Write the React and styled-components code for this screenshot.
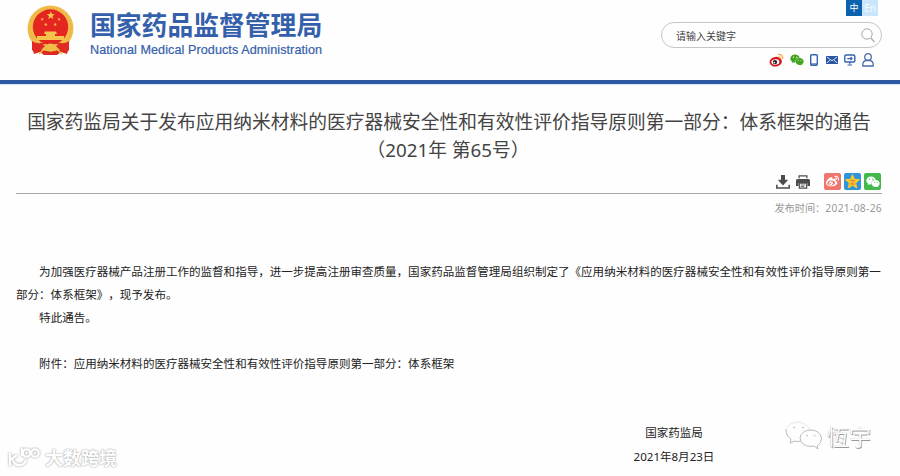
import React from 'react';
import styled, { createGlobalStyle } from 'styled-components';
import { FaWeixin, FaWeibo } from 'react-icons/fa';

const GlobalStyle = createGlobalStyle`
  * {
    box-sizing: border-box;
  }

  body {
    margin: 0;
    background: #fefefe;
    color: #333;
    font-family: 'Noto Sans', 'Noto Sans CJK SC', sans-serif;
    text-spacing-trim: space-all;
    overflow: hidden;
  }
`;

const Page = styled.div`
  position: relative;
  width: 900px;
  height: 476px;
`;

const Header = styled.header`
  display: flex;
  justify-content: space-between;
  height: 84px;
  padding-left: 27px;
  padding-right: 18px;
  border-bottom: 4px solid #3059a2;
  box-shadow: 0 1px 0 #cfe8f7;
`;

const Brand = styled.div`
  display: flex;
  padding-top: 4px;
`;

const BrandText = styled.div`
  display: flex;
  flex-direction: column;
  padding: 5px 0 0 16px;
  color: #3460ab;
`;

const BrandName = styled.div`
  font-size: 25.8px;
  font-weight: 700;
  line-height: 32px;
  white-space: nowrap;
`;

const BrandSub = styled.div`
  margin-top: 1px;
  font-family: 'Liberation Sans', sans-serif;
  font-size: 12.6px;
  line-height: 16px;
  letter-spacing: 0.08px;
  white-space: nowrap;
  -webkit-text-stroke: 0.2px #3460ab;
`;

const Tools = styled.div`
  display: flex;
  flex-direction: column;
  align-items: flex-end;
  width: 222px;
`;

const Languages = styled.div`
  display: flex;
  padding-right: 4px;
`;

const Language = styled.span`
  width: 16px;
  height: 16px;
  background: ${({ $active }) => ($active ? '#0b63b0' : '#cbe6fc')};
  color: ${({ $active }) => ($active ? '#fff' : '#f4faff')};
  font-size: ${({ $active }) => ($active ? 9 : 10)}px;
  line-height: 16px;
  text-align: center;
`;

const SearchBox = styled.div`
  display: flex;
  align-items: center;
  justify-content: space-between;
  width: 221px;
  height: 26px;
  margin-top: 6px;
  padding: 0 6px 0 14px;
  border: 1px solid #c6c6c6;
  border-radius: 13px;
  color: #444;
  font-size: 10px;
`;

const QuickLinks = styled.div`
  display: flex;
  align-items: center;
  height: 16px;
  margin-top: 4px;
  padding-right: 8px;
  gap: 6px;
`;

const PhoneSvg = styled.svg`
  margin-right: 2px;
`;

const Main = styled.main`
  display: flex;
  flex-direction: column;
  width: 866px;
  margin-left: 16px;
`;

const Title = styled.h1`
  margin: 24px 0 0;
  font-size: 18.75px;
  font-weight: 400;
  line-height: 28px;
  text-align: center;
  white-space: nowrap;
  color: #444;
`;

const IssueNumber = styled.span`
  margin-left: -2px;
`;

const ShareBar = styled.div`
  display: flex;
  justify-content: flex-end;
  height: 30px;
  padding: 9px 1px 0 0;
  border-bottom: 1px solid #a9a9a9;
`;

const ActionIcons = styled.div`
  display: flex;
  gap: 6px;
  padding: 2px 14px 0 0;
`;

const ShareIcons = styled.div`
  display: flex;
  gap: 3px;
`;

const ShareTile = styled.span`
  display: flex;
  align-items: center;
  justify-content: center;
  width: 17px;
  height: 17px;
  border-radius: 2px;
  background: ${({ $color }) => $color};
  color: #fff;
`;

const PublishDate = styled.div`
  display: flex;
  justify-content: flex-end;
  margin-top: 5px;
  color: #999;
  font-size: 10.2px;
  line-height: 18px;
`;

const DateValue = styled.span`
  letter-spacing: 0.35px;
`;

const Article = styled.article`
  margin-top: 43px;
  color: #222;
  font-size: 11.547px;
  line-height: 23.1px;
`;

const Paragraph = styled.p`
  margin: 0 0 ${({ $spaced }) => ($spaced ? '23.1px' : 0)};
  text-indent: 2em;
`;

const Signature = styled.div`
  display: flex;
  flex-direction: column;
  align-items: center;
  width: 90px;
  margin: 46px 0 0 613px;
  white-space: nowrap;
`;

const Watermark = styled.div`
  position: absolute;
  left: ${({ $left }) => $left}px;
  top: ${({ $top }) => $top}px;
  display: flex;
  align-items: center;
  gap: ${({ $gap }) => $gap}px;
`;

const SiteMark = styled.span`
  color: #fff;
  font-size: 18px;
  font-weight: 700;
  line-height: 24px;
  text-shadow: 0 0 2px #a4a4a4, 0 0 1px #b4b4b4;
`;

const AccountMark = styled.span`
  color: #fdfdfd;
  font-size: 22px;
  line-height: 28px;
  text-shadow: 0.7px 0.7px 0 #999, -0.5px -0.5px 0 #ccc;
`;

const star = (cx, cy, r) =>
  Array.from({ length: 10 }, (_, i) => {
    const a = (Math.PI / 5) * i - Math.PI / 2;
    const d = i % 2 ? r * 0.45 : r;
    return `${cx + d * Math.cos(a)},${cy + d * Math.sin(a)}`;
  }).join(' ');

const Emblem = () => (
  <svg width="47" height="52" viewBox="0 0 47 52">
    <path d="M8 36 L39 36 L42 42 L40 50 L34 48 L30 51 H17 L13 48 L7 50 L5 42Z" fill="#dc2920" />
    <circle cx="23.5" cy="24.5" r="23" fill="#f0bd4b" />
    <circle cx="23.5" cy="24.5" r="20.5" fill="none" stroke="#e2a638" strokeWidth="0.7" strokeDasharray="2 1.5" />
    <circle cx="23.5" cy="23" r="17.7" fill="#e52620" />
    <g fill="#f6c44c">
      <polygon points={star(23.8, 11.5, 4.2)} />
      <polygon points={star(15.2, 15.3, 1.8)} />
      <polygon points={star(32, 15.3, 1.8)} />
      <polygon points={star(18.8, 20.5, 1.8)} />
      <polygon points={star(28.2, 20.5, 1.8)} />
      <path d="M18 27.5h11l1 2.5h-2v2h9v4H10v-4h9v-2h-2z" />
    </g>
    <path d="M5 37 Q9 40 14 39 L18 42 L13 47 L8 49 L5 46Z M42 37 Q38 40 33 39 L29 42 L34 47 L39 49 L42 46Z" fill="#df2b21" />
    <path d="M13 39.5H34" stroke="#df2b21" strokeWidth="1.2" />
    <circle cx="23.5" cy="43.5" r="4" fill="#f0bd4b" />
    <path d="M12 50l5-5M35 50l-5-5" stroke="#f0bd4b" strokeWidth="1.5" />
    <path d="M17 49.5h13" stroke="#df2b21" strokeWidth="2" />
  </svg>
);

const SearchIcon = () => (
  <svg width="14" height="15" viewBox="0 0 14 15" fill="none" stroke="#aaa">
    <circle cx="6" cy="6" r="5.2" />
    <path d="M9.8 10l3.7 4" strokeWidth="1.2" />
  </svg>
);

const WeiboColor = () => (
  <svg width="15" height="14" viewBox="0 0 15 14">
    <ellipse cx="6.7" cy="8.7" rx="6.2" ry="4.8" fill="#d21820" transform="rotate(-8 6.7 8.7)" />
    <ellipse cx="6.4" cy="9" rx="4" ry="2.7" fill="#fff" transform="rotate(-8 6.4 9)" />
    <circle cx="6" cy="9.1" r="2.2" fill="#222" />
    <circle cx="5.4" cy="9.6" r="0.8" fill="#fff" />
    <path d="M9 1.5Q13.6.8 13.8 6M9.3 4Q11.5 3.8 11.5 6" fill="none" stroke="#f2ac4e" strokeWidth="1.4" />
  </svg>
);

const PhoneIcon = () => (
  <PhoneSvg width="8" height="12" viewBox="0 0 8 12">
    <rect x="0.7" y="0.7" width="6.6" height="10.6" rx="1" fill="#fff" stroke="#3562ad" strokeWidth="1.4" />
    <path d="M1 10h6" stroke="#3562ad" strokeWidth="1.2" />
  </PhoneSvg>
);

const MailIcon = () => (
  <svg width="12" height="8" viewBox="0 0 12 8">
    <rect width="12" height="8" fill="#2b57a5" />
    <path d="M.8 1L6 4.8L11.2 1M.8 7L4 4.2M11.2 7L8 4.2" fill="none" stroke="#fff" strokeWidth="0.8" />
  </svg>
);

const MonitorIcon = () => (
  <svg width="12" height="12" viewBox="0 0 12 12" fill="none" stroke="#3562ad" strokeWidth="1.4">
    <rect x="0.8" y="1" width="10" height="7" rx="1.2" />
    <path d="M3.2 4.6h4.8M6.5 3l1.6 1.6L6.5 6.2M5.8 8v2.2M3.6 11h4.4" strokeWidth="1.1" />
  </svg>
);

const UserIcon = () => (
  <svg width="12" height="14" viewBox="0 0 12 14" fill="none" stroke="#4a6dac" strokeWidth="1.3">
    <circle cx="6" cy="4" r="3.3" />
    <path d="M.8 13V11.6Q.8 8 4.3 7.5H7.7Q11.2 8 11.2 11.6V13Z" />
  </svg>
);

const DownloadIcon = () => (
  <svg width="14" height="14" viewBox="0 0 14 14" fill="#4c4c4c">
    <path d="M5 0h4v4.8H12.2L7 10.4 1.8 4.8H5z" />
    <path d="M.8 9.8v3.2h12.4V9.8" fill="none" stroke="#4c4c4c" strokeWidth="1.5" />
  </svg>
);

const PrinterIcon = () => (
  <svg width="14" height="14" viewBox="0 0 14 14" fill="#4c4c4c">
    <path d="M2.5 3.2V.3h9v2.9h-1.2V1.6H3.7v1.6z" />
    <path d="M1.5 4h11Q14 4 14 5.5V11h-2.5V8h-9v3H0V5.5Q0 4 1.5 4z" />
    <path d="M3.3 8.2h7.4v5H3.3z" fill="#fff" stroke="#4c4c4c" strokeWidth="1.2" />
    <path d="M4.7 10h4.6M4.7 11.5h3.5" stroke="#4c4c4c" strokeWidth="0.8" />
  </svg>
);

const QzoneIcon = () => (
  <svg width="17" height="17" viewBox="0 0 17 17">
    <polygon points={star(8.5, 9, 7.4)} fill="#fcc62d" stroke="#fcc62d" strokeLinejoin="round" />
    <path d="M6 7.4h4.6L6.6 11h4.6" fill="none" stroke="#d9892a" strokeWidth="1" />
  </svg>
);

const SiteLogo = () => (
  <svg
    width="33"
    height="24"
    viewBox="0 0 33 24"
    fill="none"
    stroke="#fff"
    strokeWidth="2.2"
    style={{ filter: 'drop-shadow(0 0 1px #999)' }}
  >
    <path d="M2 7v13M2 14l7-5M4 13q3 7 9 6 4-1 5-5M14 2v8" />
    <circle cx="18.5" cy="7" r="3.7" />
    <circle cx="27" cy="7" r="3.7" />
  </svg>
);

const ChatOutline = () => (
  <svg width="38" height="30" viewBox="0 0 38 30" fill="#fefefe" stroke="#b4b4b4" strokeWidth="0.9">
    <path d="M1 8Q1 15 6 18L5 22 10 20Q13 21 16 20" />
    <path d="M2 7Q4 2 13 1 22 2 25 9" stroke="#e2e2e2" />
    <path d="M32 25Q37 22 36.5 17 35 9.5 26 9 16 9.5 15 17 16 25 26 25.5L29 25 33 28Z" />
    <path d="M8 7q1.2-2 2.4 0M17 7q1.2-2 2.4 0M21 15q1-1.7 2 0M28.5 15q1-1.7 2 0" fill="none" />
  </svg>
);

const App = () => {
  return (
    <Page>
      <GlobalStyle />
      <Header>
        <Brand>
          <Emblem />
          <BrandText>
            <BrandName>国家药品监督管理局</BrandName>
            <BrandSub>National Medical Products Administration</BrandSub>
          </BrandText>
        </Brand>
        <Tools>
          <Languages>
            <Language $active>中</Language>
            <Language>En</Language>
          </Languages>
          <SearchBox>
            <span>请输入关键字</span>
            <SearchIcon />
          </SearchBox>
          <QuickLinks>
            <WeiboColor />
            <FaWeixin size={14} color="#43a321" />
            <PhoneIcon />
            <MailIcon />
            <MonitorIcon />
            <UserIcon />
          </QuickLinks>
        </Tools>
      </Header>

      <Main>
        <Title>
          国家药监局关于发布应用纳米材料的医疗器械安全性和有效性评价指导原则第一部分：体系框架的通告
          <br />
          <IssueNumber>（2021年 第65号）</IssueNumber>
        </Title>
        <ShareBar>
          <ActionIcons>
            <DownloadIcon />
            <PrinterIcon />
          </ActionIcons>
          <ShareIcons>
            <ShareTile $color="#f0766d">
              <FaWeibo size={13} />
            </ShareTile>
            <ShareTile $color="#2b96dc">
              <QzoneIcon />
            </ShareTile>
            <ShareTile $color="#43b94b">
              <FaWeixin size={14} />
            </ShareTile>
          </ShareIcons>
        </ShareBar>
        <PublishDate>
          发布时间：<DateValue>2021-08-26</DateValue>
        </PublishDate>

        <Article>
          <Paragraph>
            为加强医疗器械产品注册工作的监督和指导，进一步提高注册审查质量，国家药品监督管理局组织制定了《应用纳米材料的医疗器械安全性和有效性评价指导原则第一部分：体系框架》，现予发布。
          </Paragraph>
          <Paragraph $spaced>特此通告。</Paragraph>
          <Paragraph>附件：应用纳米材料的医疗器械安全性和有效性评价指导原则第一部分：体系框架</Paragraph>
          <Signature>
            <span>国家药监局</span>
            <span>2021年8月23日</span>
          </Signature>
        </Article>
      </Main>

      <Watermark $left={8} $top={446} $gap={4}>
        <SiteLogo />
        <SiteMark>大数跨境</SiteMark>
      </Watermark>
      <Watermark $left={785} $top={421} $gap={4}>
        <ChatOutline />
        <AccountMark>恆宇</AccountMark>
      </Watermark>
    </Page>
  );
};

export default App;
